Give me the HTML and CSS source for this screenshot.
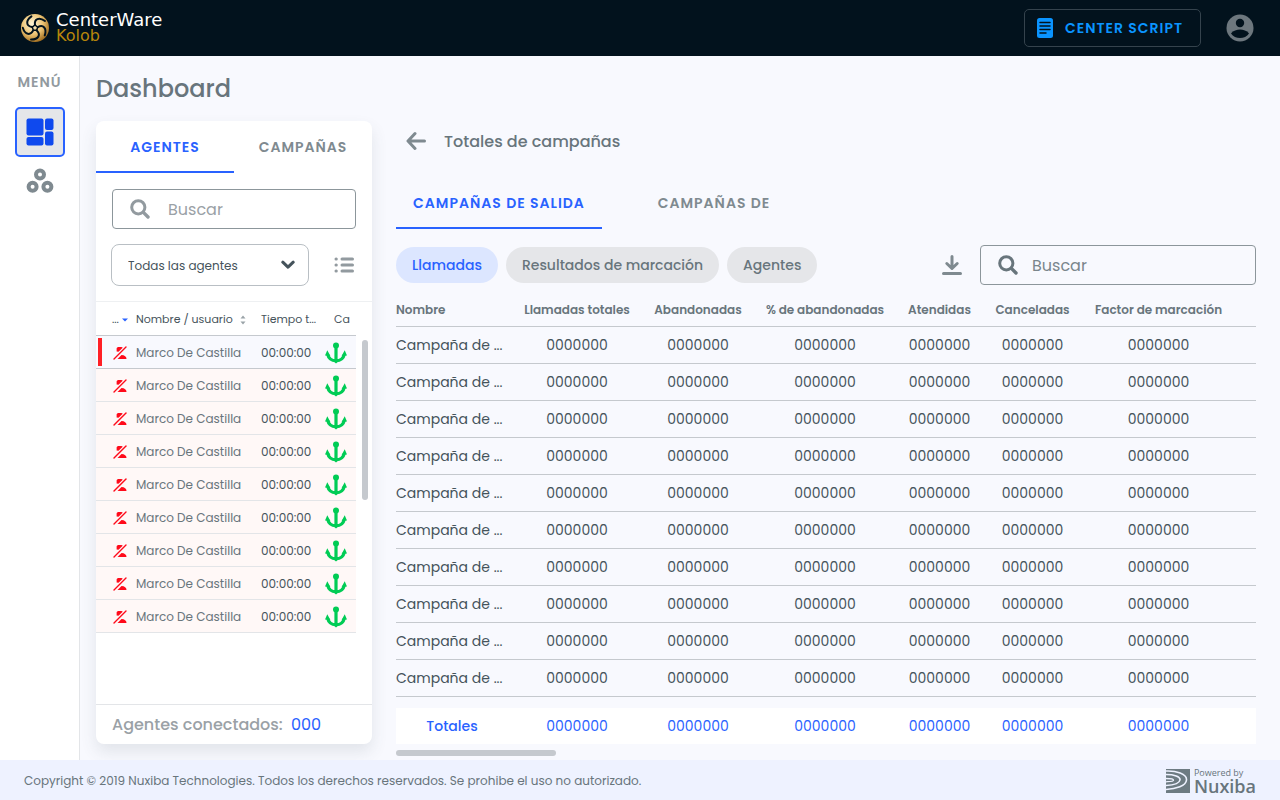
FILE: index.html
```html
<!DOCTYPE html>
<html lang="es">
<head>
    <meta charset="utf-8">
    <meta name="viewport" content="width=device-width, initial-scale=1.0">
    <title>CenterWare Kolob - Dashboard</title>
    <link rel="stylesheet" href="styles.css">
</head>
<body>
    <svg class="sprite" aria-hidden="true">
        <symbol id="icon-search" viewBox="0 0 20 20">
            <circle cx="8.3" cy="8.3" r="6.6" fill="none" stroke="currentColor" stroke-width="3"/>
            <path d="M13.4 13.4L18 18" stroke="currentColor" stroke-width="3.4" stroke-linecap="round"/>
        </symbol>
        <symbol id="icon-status" viewBox="0 0 16 16">
            <path d="M4.600 6.500V4C4.600 2.600 5.600 2 7 2H9.300C10 2 10.400 2.300 10.700 2.700L6.500 6.800Z" fill="#ff0a1a"/>
            <path d="M5.500 14L9.500 10C12.500 10.200 14.500 11.500 14.500 14Z" fill="#ff0a1a"/>
            <path d="M2 14L14 2" stroke="#ff0a1a" stroke-width="1.400" stroke-linecap="round"/>
        </symbol>
        <symbol id="icon-anchor" viewBox="0 0 22 22">
            <circle cx="11" cy="3.4" r="3" fill="#0c5"/>
            <path d="M11 4V19M2.700 12.500C3.600 16.500 7 18.700 11 18.700S18.400 16.500 19.300 12.500" fill="none" stroke="#0c5" stroke-width="3.200"/>
            <path d="M2.300 8.200L5.400 14L0 13.400ZM19.700 8.200L22 13.400L16.600 14ZM8 19H14L11 21.600Z" fill="#0c5"/>
        </symbol>
    </svg>

    <header class="topbar">
        <a class="brand" href="#">
            <svg width="30" height="30" viewBox="0 0 30 30" aria-hidden="true">
                <defs>
                    <radialGradient id="gold" cx=".4" cy=".35" r=".7">
                        <stop offset="0" stop-color="#fff6d8"/>
                        <stop offset=".55" stop-color="#ecc373"/>
                        <stop offset="1" stop-color="#9a6516"/>
                    </radialGradient>
                </defs>
                <circle cx="15" cy="15" r="14" fill="url(#gold)"/>
                <g fill="none" stroke="#02121d" stroke-width="2" stroke-linecap="round">
                    <path id="swirl" d="M15 12C14 6 19 3.500 25 8"/>
                    <use href="#swirl" transform="rotate(72 15 15)"/>
                    <use href="#swirl" transform="rotate(144 15 15)"/>
                    <use href="#swirl" transform="rotate(216 15 15)"/>
                    <use href="#swirl" transform="rotate(288 15 15)"/>
                    <path d="M12.300 14.200L15 12L17.700 14.200L16.700 17.300H13.300Z" stroke-width="1.500"/>
                </g>
            </svg>
            <span class="brand-name">CenterWare<span>Kolob</span></span>
        </a>
        <button class="script-btn" type="button">
            <svg width="16" height="20" viewBox="0 0 16 20" aria-hidden="true">
                <rect width="16" height="20" rx="2.500" fill="#0a94ff"/>
                <path d="M3 4.500H13M3 8H13M3 11.500H13M3 15H9" stroke="#02121d" stroke-width="1.500" stroke-linecap="round"/>
            </svg>
            CENTER SCRIPT
        </button>
        <button class="icon-btn user" type="button" aria-label="Usuario">
            <svg width="28" height="28" viewBox="0 0 28 28" aria-hidden="true">
                <circle cx="14" cy="14" r="13.500" fill="#6d777e"/>
                <circle cx="14" cy="9" r="4.200" fill="#02121d"/>
                <path d="M5 19.500C7 16.500 11 15.500 14 15.500S21 16.500 23 19.500C21 22.500 17.500 24 14 24S7 22.500 5 19.500Z" fill="#02121d"/>
            </svg>
        </button>
    </header>

    <nav class="sidebar">
        <span class="menu-label">MENÚ</span>
        <a class="menu-item active" href="#" aria-label="Dashboard">
            <svg width="28" height="28" viewBox="0 0 28 28" fill="#0f49ee" aria-hidden="true">
                <rect x=".500" y=".500" width="17" height="17" rx="2"/>
                <rect x="19" y=".500" width="8.500" height="11.500" rx="2"/>
                <rect x=".500" y="19" width="17" height="8.500" rx="2"/>
                <rect x="19" y="13.500" width="8.500" height="14" rx="2"/>
            </svg>
        </a>
        <a class="menu-item" href="#" aria-label="Grupos">
            <svg width="28" height="26" viewBox="0 0 28 26" fill="none" stroke="#7f8a90" stroke-width="4" aria-hidden="true">
                <circle cx="14" cy="6.500" r="4"/>
                <circle cx="6.600" cy="18.700" r="4"/>
                <circle cx="21.400" cy="18.700" r="4"/>
            </svg>
        </a>
    </nav>

    <main>
        <h1>Dashboard</h1>
        <div class="columns">
            <section class="card">
                <div class="tabs">
                    <button class="tab active" type="button">AGENTES</button>
                    <button class="tab" type="button">CAMPAÑAS</button>
                </div>
                <div class="filters">
                    <label class="search">
                        <svg width="20" height="20" aria-hidden="true"><use href="#icon-search"/></svg>
                        <input type="text" placeholder="Buscar" aria-label="Buscar agentes">
                    </label>
                    <div class="filter-row">
                        <div class="select">
                            <select aria-label="Filtro de agentes">
                                <option>Todas las agentes</option>
                            </select>
                            <svg width="14" height="10" viewBox="0 0 14 10" aria-hidden="true">
                                <path d="M1.800 2.200L7 7.200L12.200 2.200" fill="none" stroke="#45535b" stroke-width="3" stroke-linecap="round" stroke-linejoin="round"/>
                            </svg>
                        </div>
                        <button class="icon-btn" type="button" aria-label="Vista de lista">
                            <svg width="20" height="18" viewBox="0 0 20 18" stroke="#929a9f" stroke-width="3" stroke-linecap="round" aria-hidden="true">
                                <path d="M8 3H18.500M8 9H18.500M8 15H18.500M2 3H2.300M2 9H2.300M2 15H2.300"/>
                            </svg>
                        </button>
                    </div>
                </div>
                <div class="agents-wrap">
                    <table class="agents">
                        <thead>
                            <tr>
                                <th class="c-status">...
                                    <svg width="6" height="4" viewBox="0 0 6 4" aria-hidden="true"><path d="M0 .500H6L3 3.500Z" fill="#2962ff"/></svg>
                                </th>
                                <th class="c-name"><div>Nombre / usuario
                                    <svg width="6" height="10" viewBox="0 0 6 10" aria-hidden="true"><path d="M.500 3.500H5.500L3 .500ZM.500 6.500H5.500L3 9.500Z" fill="#9aa3a8"/></svg></div>
                                </th>
                                <th class="c-time">Tiempo t...</th>
                                <th class="c-channel">Ca</th>
                            </tr>
                        </thead>
                        <tbody id="agents"></tbody>
                    </table>
                    <div class="vscroll"></div>
                </div>
                <div class="card-foot">Agentes conectados: <span>000</span></div>
            </section>

            <section class="totals">
                <div class="back-row">
                    <button class="icon-btn" type="button" aria-label="Regresar">
                        <svg width="20" height="20" viewBox="0 0 20 20" fill="none" stroke="#7f8a90" stroke-width="3" stroke-linecap="round" stroke-linejoin="round" aria-hidden="true">
                            <path d="M18.500 10H2.500M9 2.500L2 10L9 17.500"/>
                        </svg>
                    </button>
                    <h2>Totales de campañas</h2>
                </div>
                <div class="tabs">
                    <button class="tab active" type="button">CAMPAÑAS DE SALIDA</button>
                    <button class="tab" type="button">CAMPAÑAS DE</button>
                </div>
                <div class="tools">
                    <button class="chip active" type="button">Llamadas</button>
                    <button class="chip" type="button">Resultados de marcación</button>
                    <button class="chip" type="button">Agentes</button>
                    <button class="icon-btn download" type="button" aria-label="Descargar">
                        <svg width="20" height="20" viewBox="0 0 20 20" fill="none" stroke="#7f8a90" stroke-width="3" stroke-linecap="round" stroke-linejoin="round" aria-hidden="true">
                            <path d="M10 1.500V13M4.800 8.500L10 13.500L15.200 8.500M1.500 18.500H18.500"/>
                        </svg>
                    </button>
                    <label class="search dark">
                        <svg width="20" height="20" aria-hidden="true"><use href="#icon-search"/></svg>
                        <input type="text" placeholder="Buscar" aria-label="Buscar campañas">
                    </label>
                </div>
                <table class="campaigns">
                    <thead>
                        <tr>
                            <th class="c-camp">Nombre</th>
                            <th class="c-total">Llamadas totales</th>
                            <th class="c-aband">Abandonadas</th>
                            <th class="c-pct">% de abandonadas</th>
                            <th class="c-att">Atendidas</th>
                            <th class="c-canc">Canceladas</th>
                            <th class="c-factor">Factor de marcación</th>
                        </tr>
                    </thead>
                    <tbody id="campaigns"></tbody>
                    <tfoot>
                        <tr>
                            <td>Totales</td>
                            <td>0000000</td>
                            <td>0000000</td>
                            <td>0000000</td>
                            <td>0000000</td>
                            <td>0000000</td>
                            <td class="c-factor">0000000</td>
                        </tr>
                    </tfoot>
                </table>
                <div class="hscroll"></div>
            </section>
        </div>
    </main>

    <footer>
        <span>Copyright © 2019 Nuxiba Technologies. Todos los derechos reservados. Se prohibe el uso no autorizado.</span>
        <div class="powered">
            <svg width="24" height="24" viewBox="0 0 24 24" aria-hidden="true">
                <rect width="24" height="24" fill="#6d7b82"/>
                <g fill="none" stroke="#eef2ff">
                    <path d="M0 2C10 1.500 21 5 20.500 11C20 17 10 20 0 20.500" stroke-width="1.600"/>
                    <path d="M0 5.500C8 5.500 14.500 7.500 14 11C13.500 14.500 7 16 0 16.500" stroke-width="1.600"/>
                    <path d="M0 9.500C4 9.500 7.500 10 7.500 11.200S4 12.500 0 12.800" stroke-width="1.300"/>
                </g>
            </svg>
            <div class="powered-name">
                <small>Powered by</small>
                <b>Nuxiba</b>
            </div>
        </div>
    </footer>
    <script src="app.js"></script>
</body>
</html>
```
FILE: styles.css
```css
* {
    box-sizing: border-box;
}
body {
    margin: 0;
    min-height: 100vh;
    display: grid;
    grid-template-columns: 80px 1fr;
    grid-template-rows: 56px 1fr 40px;
    background-color: #f8f9fe;
    color: #68757c;
    font-family: Poppins, Inter, sans-serif;
    font-size: 14px;
}
button, input, select {
    font: inherit;
    color: inherit;
    background: none;
    border: none;
    margin: 0;
    padding: 0;
}
svg {
    display: block;
    flex: none;
}
.sprite {
    position: absolute;
    width: 0;
    height: 0;
}
.icon-btn {
    display: flex;
    align-items: center;
    justify-content: center;
}

/* top bar */
.topbar {
    grid-column: 1 / 3;
    display: flex;
    align-items: center;
    padding: 0 26px 0 20px;
    background-color: #02121d;
}
.brand {
    display: flex;
    align-items: center;
    gap: 6px;
    flex: 1;
    color: #fff;
    font-family: "DejaVu Sans", sans-serif;
    font-size: 18px;
    line-height: 16px;
    text-decoration: none;
}
.brand-name span {
    display: block;
    font-size: 16px;
    color: #b8860b;
}
.script-btn {
    display: flex;
    align-items: center;
    gap: 12px;
    height: 38px;
    padding: 0 17px 0 12px;
    margin-right: 25px;
    border: 1px solid #35434d;
    border-radius: 5px;
    color: #0a94ff;
    font-weight: 600;
    letter-spacing: 1px;
}

/* side menu */
.sidebar {
    display: flex;
    flex-direction: column;
    align-items: center;
    padding-top: 16px;
    background-color: #fff;
    border-right: 1px solid #e3e5e8;
}
.menu-label {
    height: 20px;
    margin-bottom: 15px;
    color: #929a9f;
    line-height: 20px;
    font-weight: 600;
    letter-spacing: 1px;
}
.menu-item {
    display: flex;
    align-items: center;
    justify-content: center;
    width: 50px;
    height: 48px;
}
.menu-item.active {
    height: 50px;
    background-color: #e5e6e9;
    border: 2px solid #2962ff;
    border-radius: 5px;
}

/* content */
main {
    min-width: 0;
    display: flex;
    flex-direction: column;
    padding: 16px 24px 4px 16px;
}
h1 {
    margin: 0 0 16px;
    font-size: 24px;
    line-height: 33px;
    font-weight: 500;
}
.columns {
    flex: 1;
    display: flex;
    gap: 24px;
}
.card {
    flex: none;
    width: 276px;
    display: flex;
    flex-direction: column;
    margin-bottom: 12px;
    background-color: #fff;
    border-radius: 8px;
    box-shadow: 0 8px 16px rgba(69, 83, 91, 0.12);
}
.tabs {
    display: flex;
    height: 52px;
}
.tab {
    width: 50%;
    color: #7f8a90;
    font-weight: 600;
    letter-spacing: 1px;
    border-top: 2px solid transparent;
    border-bottom: 2px solid transparent;
}
.tab.active {
    color: #2962ff;
    border-bottom-color: #2962ff;
}
.filters {
    display: flex;
    flex-direction: column;
    gap: 15px;
    padding: 16px 16px 15px;
}
.search {
    display: flex;
    align-items: center;
    gap: 18px;
    height: 40px;
    padding: 0 17px;
    border: 1px solid #8c969b;
    border-radius: 4px;
    color: #929a9f;
    font-size: 16px;
}
.search input {
    flex: 1;
    min-width: 0;
    outline: none;
}
.search input::placeholder {
    color: #9aa1a6;
}
.search.dark {
    width: 276px;
    gap: 14px;
    color: #68757c;
}
.search.dark input::placeholder {
    color: #7a868c;
}
.filter-row {
    display: flex;
    justify-content: space-between;
    margin-left: -1px;
    padding-right: 2px;
}
.select {
    position: relative;
    width: 198px;
    height: 42px;
}
.select select {
    width: 100%;
    height: 100%;
    padding: 0 40px 0 16px;
    border: 1px solid #b9bfc4;
    border-radius: 8px;
    color: #45535b;
    font-size: 12px;
    appearance: none;
}
.select svg {
    position: absolute;
    right: 14px;
    top: 16px;
    pointer-events: none;
}

/* agents list */
.agents-wrap {
    flex: 1;
    display: flex;
    border-top: 1px solid #eef0f2;
}
table {
    table-layout: fixed;
    border-collapse: separate;
    border-spacing: 0;
}
th, td {
    padding: 0;
    white-space: nowrap;
}
.agents {
    width: 260px;
    align-self: flex-start;
    font-size: 12px;
}
.agents th {
    height: 34px;
    padding-top: 2px;
    border-bottom: 1px solid #c5c9ce;
    color: #45535b;
    font-size: 11px;
    font-weight: 400;
    text-align: left;
}
.agents td {
    height: 33px;
    padding-top: 1px;
    background-color: #fff8f7;
    border-bottom: 1px solid #e3e5e8;
}
.agents th svg {
    display: inline-block;
    vertical-align: middle;
}
.agents .c-status {
    width: 40px;
    padding-left: 16px;
}
.agents .c-name {
    width: 125px;
}
.agents th.c-name div {
    display: flex;
    align-items: center;
    justify-content: space-between;
    padding-right: 15px;
}
.agents td.c-time, .campaigns tbody {
    color: #45535b;
}
.agents .c-channel {
    width: 31px;
}
.agents th.c-channel {
    padding-left: 9px;
}
.agents .selected td {
    background-color: #f8f9fe;
    border-bottom-color: #c5c9ce;
}
.agents .selected td.c-status {
    background: linear-gradient(#ff1f25, #ff1f25) 2px 2px / 4px 28px no-repeat #f8f9fe;
}
.vscroll {
    width: 6px;
    height: 160px;
    margin: 38px 0 0 6px;
    border-radius: 3px;
    background-color: #c5c9ce;
}
.card-foot {
    height: 40px;
    padding: 0 16px;
    border-top: 1px solid #e3e5e8;
    color: #9aa1a6;
    font-size: 16px;
    line-height: 39px;
    font-weight: 500;
}
.card-foot span {
    margin-left: 4px;
    color: #2962ff;
    font-weight: 400;
}

/* campaign totals */
.totals {
    flex: 1;
    min-width: 0;
    display: flex;
    flex-direction: column;
}
.back-row {
    display: flex;
    align-items: center;
    gap: 18px;
    height: 40px;
    margin-bottom: 16px;
    padding-left: 10px;
}
h2 {
    margin: 0;
    font-size: 16px;
    font-weight: 500;
}
.totals .tab {
    width: 224px;
}
.totals .tab.active {
    width: 206px;
}
.tools {
    display: flex;
    align-items: center;
    gap: 8px;
    margin: 16px 0 8px;
}
.chip {
    height: 36px;
    padding: 0 16px;
    border-radius: 18px;
    background-color: #e5e6e9;
    font-weight: 500;
    white-space: nowrap;
}
.chip.active {
    background-color: #dce6ff;
    color: #2962ff;
}
.download {
    margin: 0 10px 0 auto;
}
.campaigns {
    width: 100%;
    text-align: center;
}
.campaigns th {
    height: 34px;
    border-bottom: 1px solid #c5c9ce;
    font-size: 12px;
    font-weight: 600;
}
.campaigns td {
    height: 37px;
    border-bottom: 1px solid #c5c9ce;
}
.campaigns th:first-child, .campaigns tbody td:first-child {
    text-align: left;
}
.campaigns tfoot td {
    height: 47px;
    border-top: 11px solid #f8f9fe;
    border-bottom: none;
    background-color: #fff;
    color: #2962ff;
}
.campaigns tfoot td:first-child {
    padding-right: 4px;
    font-weight: 500;
}
.c-camp {
    width: 116px;
}
.c-total {
    width: 130px;
}
.c-aband {
    width: 112px;
}
.c-pct {
    width: 142px;
}
.c-att {
    width: 87px;
}
.c-canc {
    width: 99px;
}
.campaigns .c-factor {
    padding-right: 21px;
}
.hscroll {
    width: 160px;
    height: 6px;
    margin-top: 6px;
    border-radius: 3px;
    background-color: #c5c9ce;
}

/* footer */
footer {
    grid-column: 1 / 3;
    display: flex;
    align-items: center;
    justify-content: space-between;
    padding: 1px 24px 0;
    background-color: #eef2ff;
    font-size: 12px;
}
.powered {
    display: flex;
    align-items: center;
    gap: 4px;
    font-family: "Open Sans", sans-serif;
}
.powered-name small, .powered-name b {
    display: block;
}
.powered-name small {
    font-size: 9px;
    line-height: 10px;
}
.powered-name b {
    font-size: 18px;
    line-height: 16px;
    font-weight: 600;
}
```
FILE: app.js
```js
var zero = "0000000";

function icon(name, size) {
    return '<svg width="' + size + '" height="' + size + '"><use href="#icon-' + name + '"/></svg>';
}

var agentRow = '<td class="c-status">' + icon("status", 16) + '</td>' +
    '<td class="c-name">Marco De Castilla</td>' +
    '<td class="c-time">00:00:00</td>' +
    '<td class="c-channel">' + icon("anchor", 22) + '</td>';

var agents = "";
for (var i = 0; i < 9; i++) {
    agents += '<tr' + (i === 0 ? ' class="selected"' : '') + '>' + agentRow + '</tr>';
}
document.getElementById("agents").innerHTML = agents;

var campaigns = "";
for (var j = 0; j < 10; j++) {
    campaigns += '<tr><td>Campaña de ...</td>';
    for (var k = 0; k < 6; k++) {
        campaigns += '<td' + (k === 5 ? ' class="c-factor"' : '') + '>' + zero + '</td>';
    }
    campaigns += '</tr>';
}
document.getElementById("campaigns").innerHTML = campaigns;
```
